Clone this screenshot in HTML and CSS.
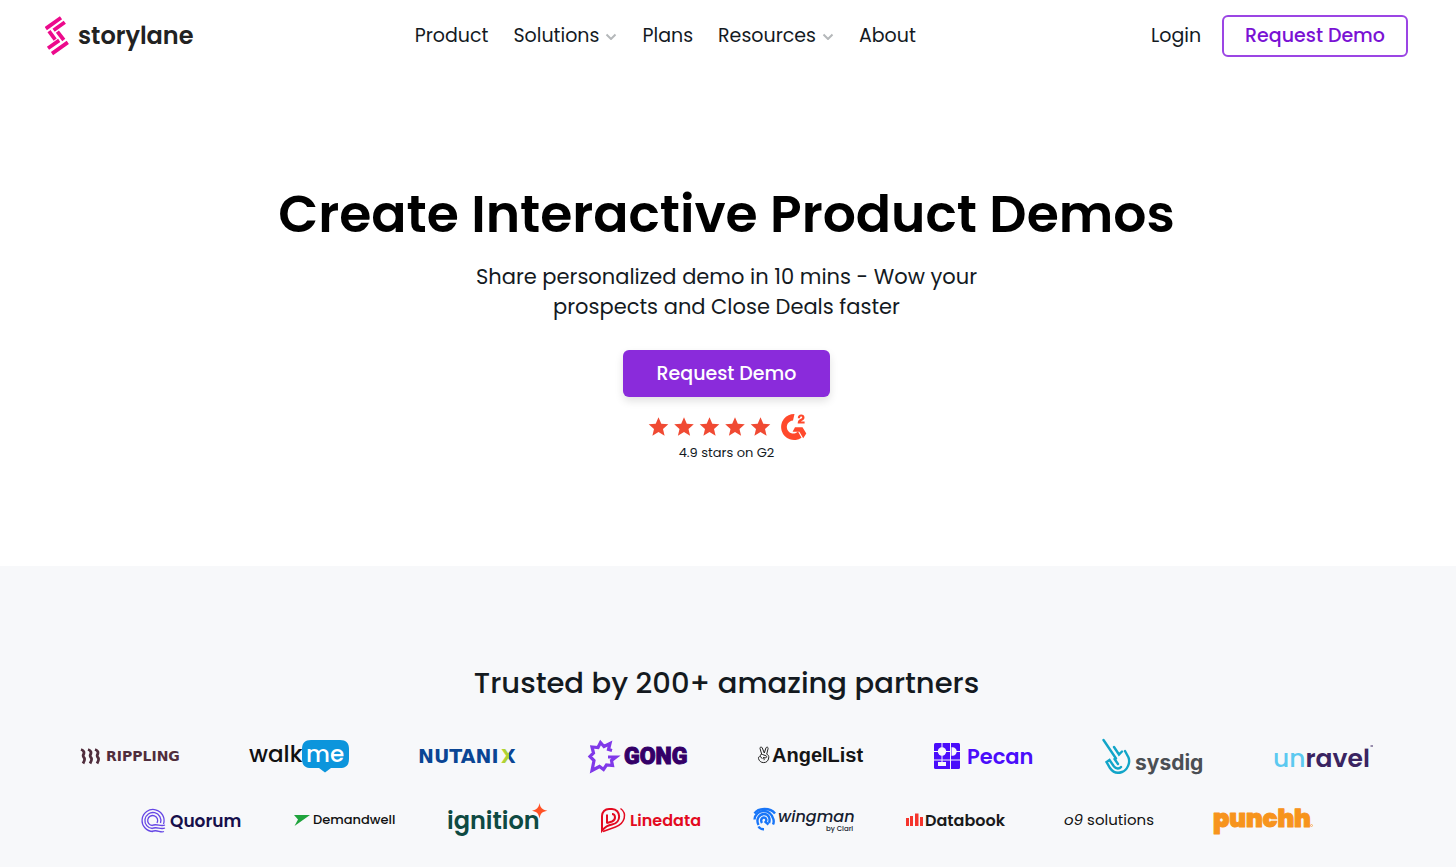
FILE: index.html
```html
<!DOCTYPE html>
<html lang="en">
<head>
  <meta charset="UTF-8">
  <meta name="viewport" content="width=device-width, initial-scale=1.0">
  <title>Storylane - Create Interactive Product Demos</title>
  <link rel="stylesheet" href="styles.css">
</head>
<body>
  <header class="header">
    <a class="brand" href="#">
      <svg width="24" height="40" viewBox="0 0 24 40" fill="none" stroke="#ec0a8c" stroke-width="3.8" aria-hidden="true">
        <path d="M.8 12.600 16 1.800M8.600 14.200 19.800 6.200M4 15.200l6.200 8.400M12.400 15.600l6.400 8.400M3 32.200l11.200-7.800M7 37.600 22.800 26.400"/>
      </svg>
      <span>storylane</span>
    </a>
    <nav class="nav">
      <a href="#">Product</a>
      <a href="#">Solutions <svg class="chevron" width="12" height="8" viewBox="0 0 12 8"><path d="M1.500 2.500 6 7l4.500-4.500"/></svg></a>
      <a href="#">Plans</a>
      <a href="#">Resources <svg class="chevron" width="12" height="8" viewBox="0 0 12 8"><path d="M1.500 2.500 6 7l4.500-4.500"/></svg></a>
      <a href="#">About</a>
    </nav>
    <div class="actions">
      <a href="#">Login</a>
      <button class="btn btn-outline">Request Demo</button>
    </div>
  </header>

  <main>
    <section class="hero">
      <h1>Create Interactive Product Demos</h1>
      <p class="lead">Share personalized demo in 10 mins - Wow your<br>prospects and Close Deals faster</p>
      <button class="btn btn-primary">Request Demo</button>
      <div class="rating">
        <svg width="160" height="28" viewBox="0 0 160 28" fill="#f04a33" aria-hidden="true">
          <defs>
            <path id="star" d="M0-9.800 2.800-3.300 9.800-2.700 4.500 1.900 6.100 8.700 0 5.100-6.100 8.700-4.500 1.900-9.800-2.700-2.800-3.300z"/>
          </defs>
          <use href="#star" x="11.500" y="14"/>
          <use href="#star" x="37" y="14"/>
          <use href="#star" x="62.500" y="14"/>
          <use href="#star" x="88" y="14"/>
          <use href="#star" x="113.500" y="14"/>
          <g fill="#ff492c">
            <path d="M147.500 1a13 13 0 1 0 7 23.700L151 18.500a6.500 6.500 0 1 1-5-11z"/>
            <path d="M148 14.200h7.500l3.800 6.400-3.100 4.600-3.800-6.500h-6.800z"/>
            <path d="M150.800 5.200c0-2.200 1.300-3.600 3.400-3.600 2 0 3.300 1.200 3.300 2.900 0 1.500-.8 2.300-2.100 3.100l-1.600 1h3.800v1.900h-6.900c0-2.300.7-3.400 2.700-4.500 1.400-.8 1.800-1 1.800-1.500s-.4-.9-1-.9c-.8 0-1.200.5-1.200 1.600z"/>
          </g>
        </svg>
        <span>4.9 stars on G2</span>
      </div>
    </section>

    <section class="partners">
      <h2>Trusted by 200+ amazing partners</h2>

      <div class="logos logos-wide">
        <svg class="logo" width="100" height="40" viewBox="0 0 100 40">
          <path fill="none" stroke="#502d3c" stroke-width="2.800" d="M1 13.500c3 1 3.500 3 2.500 5s0 2.500.8 3.500c.8 1.500.2 3-1.300 5.500M8 13.500c3 1 3.500 3 2.500 5s0 2.500.8 3.500c.8 1.500.2 3-1.300 5.500M15 13.500c3 1 3.500 3 2.500 5s0 2.500.8 3.500c.8 1.500.2 3-1.300 5.500"/>
          <text class="t-rippling" x="26" y="25">RIPPLING</text>
        </svg>
        <svg class="logo" width="100" height="40" viewBox="0 0 100 40">
          <text class="t-walk" x="0" y="26">walk</text>
          <path fill="#0c95dc" d="M62 4h29c6 0 9 3 9 9v10c0 6-3 9-9 9h-9l-6 4.500L70 32h-8c-6 0-9-3-9-9V13c0-6 3-9 9-9z"/>
          <text class="t-walk t-white" x="57" y="26">me</text>
        </svg>
        <svg class="logo" width="100" height="40" viewBox="0 0 100 40">
          <defs>
            <linearGradient id="nutanix-x">
              <stop offset=".55" stop-color="#b0d235"/>
              <stop offset=".55" stop-color="#0a4594"/>
            </linearGradient>
          </defs>
          <text class="t-nutanix" x="0" y="27">NUTANI</text>
          <text class="t-nutanix t-nutanix-x" x="83" y="27">X</text>
        </svg>
        <svg class="logo" width="100" height="40" viewBox="0 0 100 40">
          <path fill="none" stroke="#8039e9" stroke-width="3.200" d="M25 14.500l-3.500-1 1.500-6-6 3-3.500-4-2.500 5-6-.5 1.500 6-3.500 3.500 4 4-2 10 7.500-4 4 3 3-4.500 6 .5-1-5 4.500-3.500h-8"/>
          <text class="t-gong" x="37" y="28">GONG</text>
        </svg>
        <svg class="logo" width="108" height="40" viewBox="0 0 108 40">
          <g fill="none" stroke="#222" stroke-width="1" stroke-linejoin="round">
            <path d="M5.800 18.500 4 12.500c-.3-1.700 1.800-2 2.300-.5l2 5 1.600-5c.6-1.500 2.500-1 2.200.6l-1.400 5.600c1.600.6 2.400 1.800 2 3.800-.4 3-2.400 4.600-5 4.600-2.800 0-4.500-1.600-5.200-4-.4-1.500.6-2.300 1.800-1.800"/>
            <path d="M4.500 20.500c-.6-1.800.6-2.800 2-2l3.500 1.300c1.500.7.600 2.200-.7 2l-2.300-.2c1.200.6 1.500 1.600 1 2.600M4.500 20.500l1.800 2.300"/>
          </g>
          <text class="t-angel" x="16" y="26">AngelList</text>
        </svg>
        <svg class="logo" width="100" height="40" viewBox="0 0 100 40">
          <rect x="1" y="7" width="26" height="26" rx="1.500" fill="#4a0dfb"/>
          <g fill="#f7f8fa">
            <circle cx="9" cy="15.500" r="4.200"/>
            <path d="M18.500 11.300h1a4.200 4.200 0 0 1 0 8.400h-1zM5 26h8v4H5z"/>
          </g>
          <path stroke="#f7f8fa" stroke-width="1" d="M9 7v5M1 15.500h5M13 15.500h4.500M9 19v7M17.500 7v26M1 24h26M23 15.500h4"/>
          <text class="t-pecan" x="34" y="28">Pecan</text>
        </svg>
        <svg class="logo" width="102" height="40" viewBox="0 0 102 40">
          <path fill="none" stroke="#12a5c8" stroke-width="2.400" stroke-linecap="round" d="M1.500 4 14 22.500M12 11l5 7.500 3-3M23 15l3.500 6.500c2 5-1 12.500-6.500 14.500s-9 .5-12-4L4.500 26l3-2 4.500 6.500c2 2.500 5.500 2.500 7 .5M12.500 23l3.500 5"/>
          <text class="t-sysdig" x="33" y="34">sysdig</text>
        </svg>
        <svg class="logo" width="100" height="40" viewBox="0 0 100 40">
          <text class="t-unravel" x="0" y="31"><tspan class="t-un">un</tspan>ravel</text>
          <path stroke="#3a2461" d="M97.500 10h2.500"/>
        </svg>
      </div>

      <div class="logos">
        <svg class="logo" width="100" height="36" viewBox="0 0 100 36">
          <g fill="none" stroke="#6546e5" stroke-width="1.300">
            <path d="M13 29.500A11 11 0 1 1 23.500 22"/>
            <path d="M12.500 26.500a8 8 0 1 1 8-5.500"/>
            <path d="M12.500 23.500a5 5 0 1 1 4.500-2.500"/>
            <path d="M12 23.500c5-2.500 8 1.500 13-.5M12 26.500c5-2.500 8 1.500 13-.5M12 29.500c5-2.500 8 1.500 12 0"/>
          </g>
          <text class="t-quorum" x="30" y="25">Quorum</text>
        </svg>
        <svg class="logo" width="102" height="36" viewBox="0 0 102 36">
          <path fill="#1fa33c" d="M1 13h16L1.500 24 5 17.500z"/>
          <text class="t-demandwell" x="20" y="22">Demandwell</text>
        </svg>
        <svg class="logo" width="100" height="36" viewBox="0 0 100 36">
          <text class="t-ignition" x="-1" y="27">ignition</text>
          <path fill="#ff5226" d="M91.500 1c1 5 2.500 6.500 7.800 7.700-5.300 1.100-6.800 2.600-7.800 7.800-1-5.200-2.500-6.700-7.500-7.800 5-1.200 6.500-2.700 7.500-7.700z"/>
        </svg>
        <svg class="logo" width="100" height="36" viewBox="0 0 100 36">
          <g fill="none" stroke="#e30a20" stroke-width="2">
            <path d="M1 28.500V14c0-4 3-7 7-7h3c9 0 10 14 0 15.500-4 .6-7 2.500-10 6z"/>
            <path d="M6 21.500V12.500M6 21l5-1.500c4.500-2 3.500-7.500 0-7.500"/>
            <path stroke-width="1.500" d="M19.500 6.500c7 5 4.500 15-5 18.500L2 29.500"/>
          </g>
          <text class="t-linedata" x="29" y="24">Linedata</text>
        </svg>
        <svg class="logo" width="100" height="36" viewBox="0 0 100 36">
          <g fill="none" stroke="#1976f8" stroke-width="2.400">
            <path d="M.5 11.500c4-6 16-6 20.500 0"/>
            <path d="M.5 17.500c1-10.500 16-12 19 0 .4 2 .3 3.500-.5 5"/>
            <path d="M4.500 23c-3-6 1-11 5.500-11 5 0 6.500 5 5 9"/>
            <path d="M4.500 24.500c1 1.800 3 2.800 5.500 2.800M8 21c-2-3 0-5.500 2-5.500 2.500 0 3 3 1.500 4.500l3 2.500"/>
          </g>
          <text class="t-wingman" x="24" y="20">wingman</text>
          <text class="t-clari" x="72" y="29">by Clari</text>
        </svg>
        <svg class="logo" width="100" height="36" viewBox="0 0 100 36">
          <path fill="#f5342c" d="M-1 16h3v8h-3zM3 14h3v10H3zM8 11.500h3.500V24H8zM13 15h3v9h-3z"/>
          <text class="t-databook" x="18" y="24">Databook</text>
        </svg>
        <svg class="logo" width="100" height="36" viewBox="0 0 100 36">
          <text class="t-o9" x="4" y="23"><tspan class="t-slant">o9</tspan> solutions</text>
        </svg>
        <svg class="logo" width="100" height="36" viewBox="0 0 100 36">
          <text class="t-punchh" x="0" y="25">punchh</text>
          <circle cx="98.500" cy="23.500" r="1" fill="none" stroke="#f7941d" stroke-width=".6"/>
        </svg>
      </div>
    </section>
  </main>
</body>
</html>
```
FILE: styles.css
```css
* {
  box-sizing: border-box;
}
body {
  margin: 0;
  font-family: Poppins, Inter, sans-serif;
  color: #141a1f;
  background: #fff;
}
a {
  color: inherit;
  text-decoration: none;
}
.header {
  display: flex;
  justify-content: space-between;
  align-items: center;
  height: 71px;
  padding: 0 48px 0 45px;
  font-size: 19px;
}
.brand {
  display: flex;
  align-items: center;
  gap: 9px;
  font-size: 24px;
  line-height: 32px;
  font-weight: 600;
  color: #222;
}
.nav {
  display: flex;
  gap: 25px;
  margin-right: 14px;
}
.nav a {
  display: flex;
  align-items: center;
  gap: 6px;
}
.chevron {
  fill: none;
  stroke: #b5b8ba;
  stroke-width: 2;
}
.actions {
  display: flex;
  align-items: center;
  gap: 21px;
}
.btn {
  font-family: inherit;
  font-size: 19px;
  font-weight: 500;
  border-radius: 6px;
  cursor: pointer;
}
.btn-outline {
  padding: 7px 21px;
  line-height: 24px;
  color: #7a12d4;
  background: #fff;
  border: 2px solid #9b45e4;
}
.btn-primary {
  padding: 11px 34px;
  line-height: 25px;
  color: #fff;
  background: #8a2bdb;
  border: none;
  box-shadow: 0 4px 8px rgba(0, 0, 0, 0.12);
}
.hero {
  display: flex;
  flex-direction: column;
  align-items: center;
  padding: 109px 48px 102px 45px;
  text-align: center;
}
.hero h1 {
  margin: 0 0 14px;
  font-size: 52px;
  line-height: 68px;
  font-weight: 600;
  color: #000;
}
.lead {
  margin: 0 0 28px;
  font-size: 21px;
  line-height: 30px;
}
.rating {
  display: flex;
  flex-direction: column;
  align-items: center;
  margin-top: 16px;
  font-size: 13px;
  line-height: 23px;
}
.partners {
  padding: 97px 48px 30px 45px;
  background: #f7f8fa;
}
.partners h2 {
  margin: 0 0 33px;
  font-size: 29px;
  line-height: 40px;
  font-weight: 500;
  text-align: center;
}
.logos {
  display: flex;
  justify-content: center;
  gap: 53px;
}
.logos-wide {
  justify-content: space-around;
  gap: 0;
  margin-bottom: 26px;
}
.logo {
  flex-shrink: 0;
  overflow: visible;
}

/* logo wordmarks */
.t-rippling {
  font: bold 14px "DejaVu Sans", sans-serif;
  fill: #502d3c;
}
.t-walk {
  font-size: 23px;
  font-weight: 500;
  fill: #111;
}
.t-white {
  fill: #fff;
}
.t-nutanix {
  font: bold 19px "DejaVu Sans", sans-serif;
  fill: #0a4594;
}
.t-nutanix-x {
  fill: url(#nutanix-x);
}
.t-gong {
  font: 900 23px Roboto, sans-serif;
  fill: #340068;
  stroke: #340068;
}
.t-angel {
  font: bold 20px "Liberation Sans", Arial, sans-serif;
  fill: #151515;
}
.t-pecan {
  font-size: 21px;
  font-weight: 600;
  fill: #4a0dfb;
}
.t-sysdig {
  font: 700 21px Inter, sans-serif;
  fill: #4b4f54;
}
.t-unravel {
  font-size: 25px;
  font-weight: 600;
  fill: #3a2461;
}
.t-un {
  font-weight: 500;
  fill: #5cc9f0;
}
.t-quorum {
  font-size: 17px;
  font-weight: 600;
  fill: #160f4a;
}
.t-demandwell {
  font-size: 13px;
  font-weight: 500;
  fill: #111;
}
.t-ignition {
  font-size: 24px;
  font-weight: 600;
  fill: #0e4a42;
}
.t-linedata {
  font-size: 16px;
  font-weight: 600;
  fill: #e30a20;
}
.t-wingman {
  font-size: 16px;
  font-weight: 500;
  font-style: italic;
  fill: #161d30;
}
.t-clari {
  font-size: 7px;
  font-weight: 500;
  fill: #161d30;
}
.t-databook {
  font-size: 16px;
  font-weight: 600;
  fill: #1a1a1a;
}
.t-o9 {
  font-size: 15px;
  fill: #111;
}
.t-slant {
  font-style: italic;
}
.t-punchh {
  font-size: 24px;
  font-weight: 900;
  fill: #f7941d;
  stroke: #f7941d;
  stroke-linejoin: round;
}
```
